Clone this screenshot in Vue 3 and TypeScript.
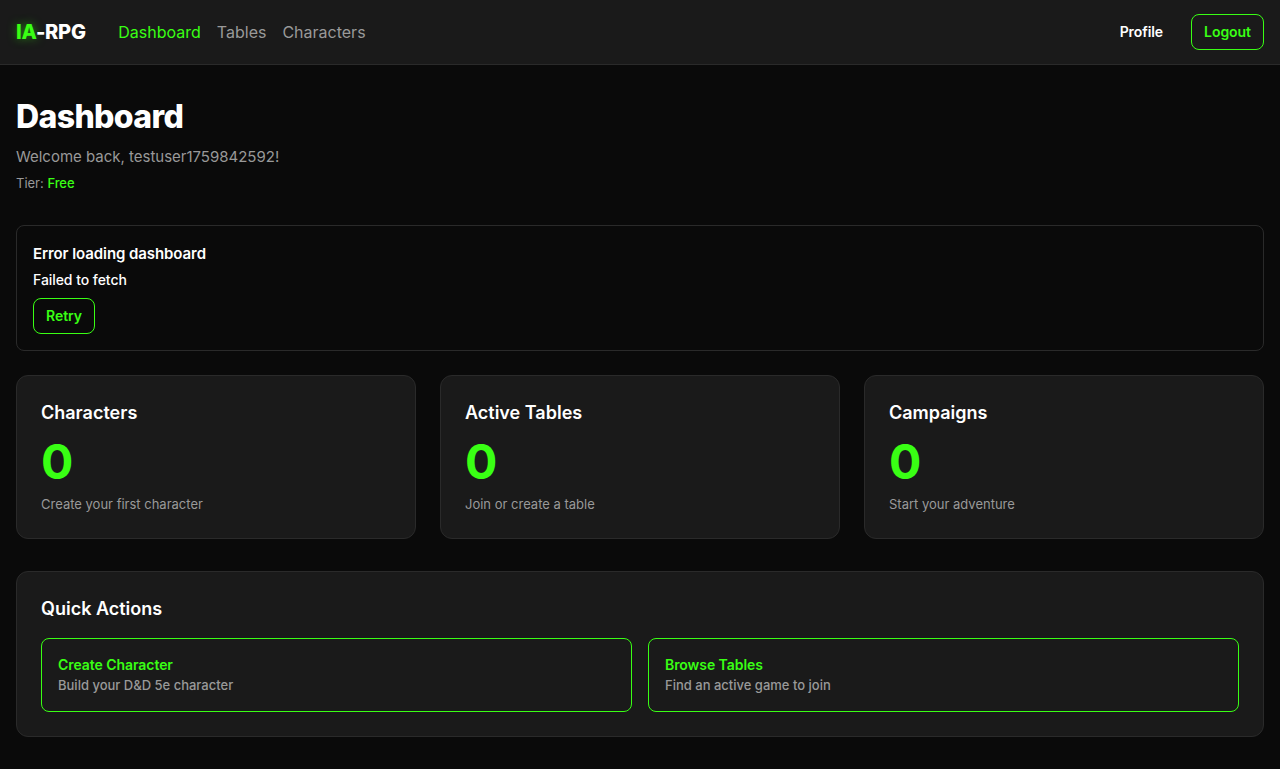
<script setup lang="ts">
interface Stat { title: string; value: number; hint: string }
interface Action { title: string; text: string }

const links: string[] = ['Dashboard', 'Tables', 'Characters']
const stats: Stat[] = [
  { title: 'Characters', value: 0, hint: 'Create your first character' },
  { title: 'Active Tables', value: 0, hint: 'Join or create a table' },
  { title: 'Campaigns', value: 0, hint: 'Start your adventure' },
]
const actions: Action[] = [
  { title: 'Create Character', text: 'Build your D&D 5e character' },
  { title: 'Browse Tables', text: 'Find an active game to join' },
]
</script>

<template>
  <div class="page">
    <header class="nav">
      <div class="brand"><span class="glow">IA</span>-RPG</div>
      <nav class="links">
        <a v-for="(link, i) in links" :key="link" :class="{ active: i === 0 }">{{ link }}</a>
      </nav>
      <div class="account">
        <button class="ghost">Profile</button>
        <button class="outline">Logout</button>
      </div>
    </header>
    <main>
      <section class="intro">
        <h1>Dashboard</h1>
        <p class="welcome">Welcome back, testuser1759842592!</p>
        <p class="tier">Tier: <span>Free</span></p>
      </section>
      <section class="alert">
        <h2>Error loading dashboard</h2>
        <p>Failed to fetch</p>
        <button class="outline">Retry</button>
      </section>
      <section class="stats">
        <article v-for="s in stats" :key="s.title" class="card">
          <h3>{{ s.title }}</h3>
          <div class="value">{{ s.value }}</div>
          <p class="hint">{{ s.hint }}</p>
        </article>
      </section>
      <section class="card quick">
        <h3>Quick Actions</h3>
        <div class="actions">
          <button v-for="a in actions" :key="a.title" class="action">
            <span class="action-title">{{ a.title }}</span>
            <span class="action-text">{{ a.text }}</span>
          </button>
        </div>
      </section>
    </main>
  </div>
</template>

<style>
body { background: #0a0a0a; }
</style>

<style scoped>
.page { min-height: 769px; background: #0a0a0a; color: #fff; font-family: Inter, sans-serif; font-size: 16px; line-height: 24px; }
.page, .page * { box-sizing: border-box; }
h1, h2, h3, p { margin: 0; }
button { font-family: inherit; cursor: pointer; }
.nav { display: flex; align-items: center; height: 65px; padding: 0 16px; background: #1a1a1a; border-bottom: 1px solid #2a2a2a; }
.brand { width: 70px; font-size: 20px; line-height: 28px; font-weight: 800; letter-spacing: -0.25px; white-space: nowrap; }
.glow { color: #39ff14; text-shadow: 0 0 10px rgba(57, 255, 20, 0.5); }
.links { display: flex; gap: 16px; margin-left: 32.3px; }
.links a { color: #999; }
.links a.active { color: #39ff14; }
.account { display: flex; gap: 16px; margin-left: auto; }
.ghost, .outline { height: 36px; padding: 0 12px; border-radius: 8px; font-size: 14px; line-height: 20px; font-weight: 600; letter-spacing: -0.08px; background: transparent; }
.ghost { border: 0; color: #fff; }
.outline { border: 1px solid #39ff14; color: #39ff14; }
.account .outline { width: 73px; }
main { padding: 32px 16px; }
.intro { margin-bottom: 32px; }
h1 { font-size: 32px; line-height: 40px; font-weight: 800; letter-spacing: -0.64px; }
.welcome { margin-top: 8px; font-size: 15px; letter-spacing: -0.01px; color: #999; }
.tier { margin-top: 4px; font-size: 13px; line-height: 20px; color: #999; }
.tier span { color: #39ff14; font-weight: 500; letter-spacing: -0.08px; }
.alert { height: 126px; padding: 16px; margin-bottom: 24px; border: 1px solid #2a2a2a; border-radius: 8px; }
.alert h2 { font-size: 15px; line-height: 24px; font-weight: 600; letter-spacing: -0.08px; }
.alert p { margin: 4px 0 8px; font-size: 14px; line-height: 20px; font-weight: 500; letter-spacing: -0.06px; }
.alert .outline { display: block; width: 62px; }
.stats { display: grid; grid-template-columns: repeat(3, 1fr); gap: 24px; margin-bottom: 32px; }
.card { padding: 24px; background: #1a1a1a; border: 1px solid #2a2a2a; border-radius: 12px; }
.stats .card { height: 164px; }
h3 { font-size: 18px; line-height: 26px; font-weight: 600; }
.value { margin-top: 12px; font-size: 48px; line-height: 48px; font-weight: 730; color: #39ff14; }
.hint { margin-top: 8px; font-size: 13px; line-height: 20px; color: #999; }
.quick { height: 166px; }
.actions { display: grid; grid-template-columns: 1fr 1fr; gap: 16px; margin-top: 16px; }
.action { display: flex; flex-direction: column; height: 74px; padding: 16px; border: 1px solid #39ff14; border-radius: 8px; background: transparent; text-align: left; font-size: 14px; line-height: 20px; }
.action-title { font-weight: 600; letter-spacing: -0.06px; color: #39ff14; }
.action-text { font-size: 13px; font-weight: 500; color: #999; }
</style>
